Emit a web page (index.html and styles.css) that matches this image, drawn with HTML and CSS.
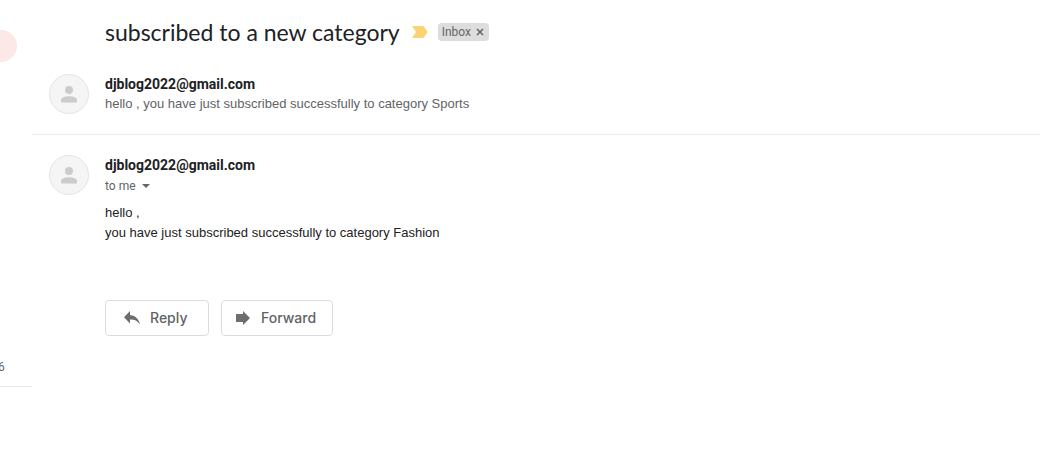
FILE: index.html
```html
<!DOCTYPE html>
<html lang="en">
<head>
<meta charset="utf-8">
<title>subscribed to a new category</title>
<link rel="stylesheet" href="styles.css">
</head>
<body>
<div class="app">
  <aside class="rail">
    <div class="bubble"></div>
    <div class="count">6</div>
  </aside>
  <main class="thread">
    <header class="subject">
      <h1 class="title">subscribed to a new category</h1>
      <svg class="marker" width="16" height="12" viewBox="0 0 16 12" aria-hidden="true"><path d="M0 0H10.500Q11.500 0 12 .8L15.500 6L12 11.200Q11.500 12 10.500 12H0L4 6Z" fill="#f9d273"/></svg>
      <span class="chip">Inbox
        <button class="remove" type="button" aria-label="Remove label Inbox"><svg width="8" height="8" viewBox="0 0 8 8"><path d="M1 1L7 7M7 1L1 7" stroke="#666" stroke-width="1.600"/></svg></button>
      </span>
    </header>
    <article class="message">
      <div class="avatar"><svg width="16" height="18" viewBox="0 0 16 18" aria-hidden="true"><circle cx="8" cy="5" r="4" fill="#ccc"/><path d="M0 17.500V15C0 12.500 4 11.300 8 11.300S16 12.500 16 15V17.500Z" fill="#ccc"/></svg></div>
      <div class="content">
        <h2 class="sender">djblog2022@gmail.com</h2>
        <p class="snippet">hello , you have just subscribed successfully to category Sports</p>
      </div>
    </article>
    <article class="message open">
      <div class="avatar"><svg width="16" height="18" viewBox="0 0 16 18" aria-hidden="true"><circle cx="8" cy="5" r="4" fill="#ccc"/><path d="M0 17.500V15C0 12.500 4 11.300 8 11.300S16 12.500 16 15V17.500Z" fill="#ccc"/></svg></div>
      <div class="content">
        <h2 class="sender">djblog2022@gmail.com</h2>
        <button class="recipient" type="button">to me <svg width="8" height="4" viewBox="0 0 8 4" aria-hidden="true"><path d="M0 0H8L4 4Z" fill="#666"/></svg></button>
        <p class="body">hello ,<br>you have just subscribed successfully to category Fashion</p>
        <div class="actions">
          <button class="action reply" type="button"><svg width="16" height="14" viewBox="0 0 16 14" aria-hidden="true"><path d="M6 4V0L0 6.200L6 12.400V8.500C10.500 8.500 13.500 9.800 16 13.500C15 8.500 12 4.700 6 4Z" fill="#6d6d6d"/></svg>Reply</button>
          <button class="action forward" type="button"><svg width="14" height="14" viewBox="0 0 14 14" aria-hidden="true"><path d="M0 3H7V0L14 7L7 14V11H0Z" fill="#6d6d6d"/></svg>Forward</button>
        </div>
      </div>
    </article>
  </main>
</div>
</body>
</html>
```
FILE: styles.css
```css
* { box-sizing: border-box; }
body {
  margin: 0;
  background: #fff;
  color: #202124;
  font-family: Roboto, "Liberation Sans", sans-serif;
}
h1, h2, p { margin: 0; }
button { margin: 0; padding: 0; border: 0; background: none; font: inherit; color: inherit; }
svg { display: block; flex: none; }
.app { display: grid; grid-template-columns: 32px minmax(0, 1fr); align-items: start; }
.rail {
  display: flex;
  flex-direction: column;
  align-items: flex-start;
  overflow: hidden;
  padding-top: 30px;
  border-bottom: 1px solid #e8e8e8;
}
.bubble { width: 32px; height: 32px; margin-left: -15px; border-radius: 50%; background: #fce8e6; }
.count { margin: 296px 0 10px -2px; font-size: 12px; line-height: 18px; color: #5f6368; }
.subject { display: flex; align-items: center; padding: 18px 16px 14px 73px; }
.title { font-family: Lato, Roboto, sans-serif; font-size: 23px; line-height: 28px; font-weight: 400; }
.marker { margin-left: 12px; }
.chip {
  display: flex;
  align-items: center;
  gap: 5px;
  height: 18px;
  margin-left: 10px;
  padding: 0 5px 0 4px;
  border-radius: 4px;
  background: #ddd;
  color: #666;
  font-size: 12px;
  line-height: 18px;
}
.message { display: flex; gap: 16px; padding: 14px 16px 20px 17px; border-bottom: 1px solid #ececec; }
.message.open { padding-top: 20px; border-bottom: 0; }
.avatar {
  display: flex;
  flex: none;
  align-items: center;
  justify-content: center;
  width: 40px;
  height: 40px;
  border: 1px solid #e4e4e4;
  border-radius: 50%;
  background: #f5f5f5;
}
.content { flex: 1; min-width: 0; }
.sender { font-size: 14px; line-height: 20px; font-weight: 700; }
.snippet, .body { font-family: "Liberation Sans", Arial, sans-serif; font-size: 13px; line-height: 20px; }
.snippet { color: #5f6368; }
.recipient { display: flex; align-items: center; gap: 6px; font-size: 12px; line-height: 22px; color: #5f6368; }
.body { margin-top: 6px; color: #222; }
.actions { display: flex; gap: 12px; margin-top: 57px; }
.action {
  display: flex;
  align-items: center;
  height: 36px;
  border: 1px solid #dadce0;
  border-radius: 4px;
  color: #5f6368;
  font-family: Inter, Roboto, sans-serif;
  font-size: 14px;
  font-weight: 500;
  line-height: 20px;
}
.reply { gap: 10px; min-width: 104px; padding: 0 16px 0 18px; }
.forward { gap: 11px; min-width: 112px; padding: 0 14px; }
```
